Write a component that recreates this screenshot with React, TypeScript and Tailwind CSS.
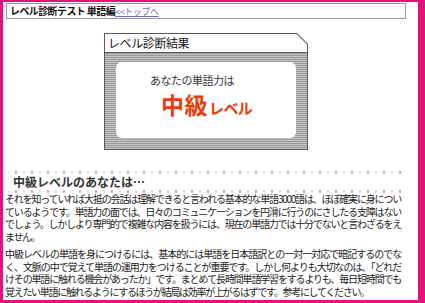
export default function App() {
  const jp = "font-['Noto_Sans_CJK_JP','Noto_Sans',sans-serif]";
  const line =
    "whitespace-nowrap text-justify [text-align-last:justify] w-[396px]";
  const last = "whitespace-nowrap";
  const dots =
    "h-[3px] w-[395px] ml-[5px] [background-image:radial-gradient(circle,#ef92bc_1px,transparent_1.6px),radial-gradient(circle,#f6d3e3_1px,transparent_1.6px)] [background-size:16px_3px] [background-position:0_0,8px_0]";
  return (
    <div
      className={`${jp} w-[425px] h-[303px] overflow-hidden bg-white border-[#e3127c] border-l-[3px] border-t-[2px] border-r-[7px] border-b-[3px] text-[#222]`}
    >
      {/* header */}
      <div className="mt-[1px] ml-[3px] w-[400px] h-[16px] border border-[#9a9a9a] flex items-center pl-[3px]">
        <span className="text-[10px] font-bold tracking-[-0.6px] leading-none text-[#111]">
          レベル診断テスト 単語編
        </span>
        <a className="text-[9px] tracking-[-0.4px] leading-none text-[#6a6acf] underline">
          &lt;&lt;トップへ
        </a>
      </div>

      {/* result box */}
      <div className="mt-[14px] ml-[101px] w-[204px] h-[117px] bg-[#5a5a5a] p-[1px] [clip-path:polygon(0_0,calc(100%_-_11px)_0,100%_11px,100%_100%,0_100%)]">
        <div className="w-full h-full bg-white flex flex-col [clip-path:polygon(0_0,calc(100%_-_10.4px)_0,100%_10.4px,100%_100%,0_100%)]">
          <div className="h-[18px] flex items-center pl-[3px] text-[12px] tracking-[-0.4px] leading-none text-[#111]">
            レベル診断結果
          </div>
          <div className="flex-1 border-t border-[#5a5a5a] px-[11px] pt-[9px] pb-[11px] [background-image:repeating-linear-gradient(#999_0_1px,#c6c6c6_1px_2px)]">
            <div className="w-full h-full bg-white rounded-[6px] pl-[34px] pt-[11px]">
              <div className="text-[11px] leading-[14px] tracking-[-0.5px] text-[#333]">
                あなたの単語力は
              </div>
              <div className="mt-[4px] ml-[11px] flex items-baseline text-[#ee3a0a] font-bold leading-[26px]">
                <span className="text-[23px] tracking-[0.5px]">中級</span>
                <span className="text-[15px] ml-[1px] tracking-[-0.6px]">レベル</span>
              </div>
            </div>
          </div>
        </div>
      </div>

      {/* section heading */}
      <div className={`${dots} mt-[21px]`} />
      <div className="h-[16px] flex items-center pl-[10px] text-[12px] font-bold leading-none text-[#333]">
        中級レベルのあなたは…
      </div>
      <div className={dots} />

      {/* body */}
      <div className="pl-[2px] text-[10px] leading-[12.7px] tracking-[-1.3px]">
        <div>
          <div className={line}>
            それを知っていれば大抵の会話は理解できると言われる基本的な単語3000語は、ほぼ確実に身につい
          </div>
          <div className={line}>
            ているようです。単語力の面では、日々のコミュニケーションを円滑に行うのにさしたる支障はない
          </div>
          <div className={line}>
            でしょう。しかしより専門的で複雑な内容を扱うには、現在の単語力では十分でないと言わざるをえ
          </div>
          <div className={last}>ません。</div>
        </div>
        <div className="mt-[4px]">
          <div className={line}>
            中級レベルの単語を身につけるには、基本的には単語を日本語訳との一対一対応で暗記するのでな
          </div>
          <div className={line}>
            く、文脈の中で覚えて単語の運用力をつけることが重要です。しかし何よりも大切なのは、「どれだ
          </div>
          <div className={line}>
            けその単語に触れる機会があったか」です。まとめて長時間単語学習をするよりも、毎日短時間でも
          </div>
          <div className={last}>
            覚えたい単語に触れるようにするほうが結局は効率が上がるはずです。参考にしてください。
          </div>
        </div>
      </div>
    </div>
  );
}
